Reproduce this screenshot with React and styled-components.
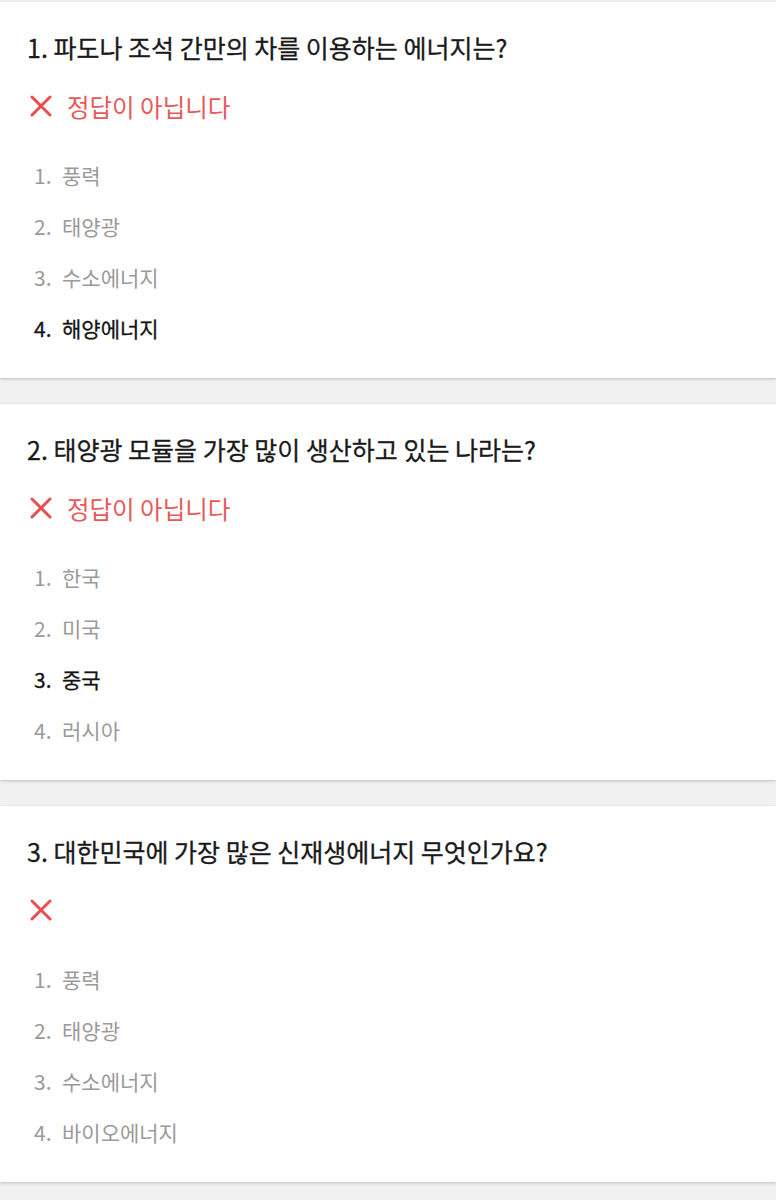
import React from 'react'
import styled, { createGlobalStyle } from 'styled-components'

const GlobalStyle = createGlobalStyle`
  body {
    margin: 0;
    background: #f1f1f1;
    font-family: "Noto Sans CJK KR", "Noto Sans", sans-serif;
  }
`

const Page = styled.div`
  display: flex;
  flex-direction: column;
  gap: 26px;
  padding: 2px 0 12px;
`

const Card = styled.div`
  background: #fff;
  box-shadow: 0 1px 3px rgba(0, 0, 0, 0.22);
  padding: 28px 27px 25px;
`

const Question = styled.h2`
  margin: 0;
  font-size: 25px;
  font-weight: 400;
  line-height: 34px;
  color: #1a1a1a;
  -webkit-text-stroke: 0.3px #1a1a1a;
`

const Result = styled.div`
  display: flex;
  align-items: center;
  gap: 15px;
  margin-top: 25px;
  height: 34px;
  padding-left: 3px;
  color: #e85a5a;
  font-size: 24.5px;
`

const Options = styled.ol`
  list-style: none;
  margin: 26px 0 0;
  padding: 0 0 0 7px;
`

const Option = styled.li`
  display: flex;
  align-items: center;
  height: 51px;
  font-size: 21px;
  color: ${(props) => (props.selected ? '#141414' : '#9a9a9a')};
  -webkit-text-stroke: ${(props) => (props.selected ? '0.3px #141414' : '0')};
`

const Num = styled.span`
  width: 28px;
`

const Cross = () => (
  <svg width="22" height="22" viewBox="0 0 22 22">
    <path
      d="M2 2 L20 20 M20 2 L2 20"
      stroke="#e84f4f"
      strokeWidth="3"
      strokeLinecap="round"
    />
  </svg>
)

const quiz = [
  {
    q: '1. 파도나 조석 간만의 차를 이용하는 에너지는?',
    result: '정답이 아닙니다',
    options: ['풍력', '태양광', '수소에너지', '해양에너지'],
    selected: 3,
  },
  {
    q: '2. 태양광 모듈을 가장 많이 생산하고 있는 나라는?',
    result: '정답이 아닙니다',
    options: ['한국', '미국', '중국', '러시아'],
    selected: 2,
  },
  {
    q: '3. 대한민국에 가장 많은 신재생에너지 무엇인가요?',
    result: '',
    options: ['풍력', '태양광', '수소에너지', '바이오에너지'],
    selected: -1,
  },
]

const App = () => {
  return (
    <>
      <GlobalStyle />
      <Page>
        {quiz.map((item) => (
          <Card key={item.q}>
            <Question>{item.q}</Question>
            <Result>
              <Cross />
              {item.result && <span>{item.result}</span>}
            </Result>
            <Options>
              {item.options.map((opt, i) => (
                <Option key={opt} selected={i === item.selected}>
                  <Num>{i + 1}.</Num>
                  {opt}
                </Option>
              ))}
            </Options>
          </Card>
        ))}
      </Page>
    </>
  )
}

export default App
